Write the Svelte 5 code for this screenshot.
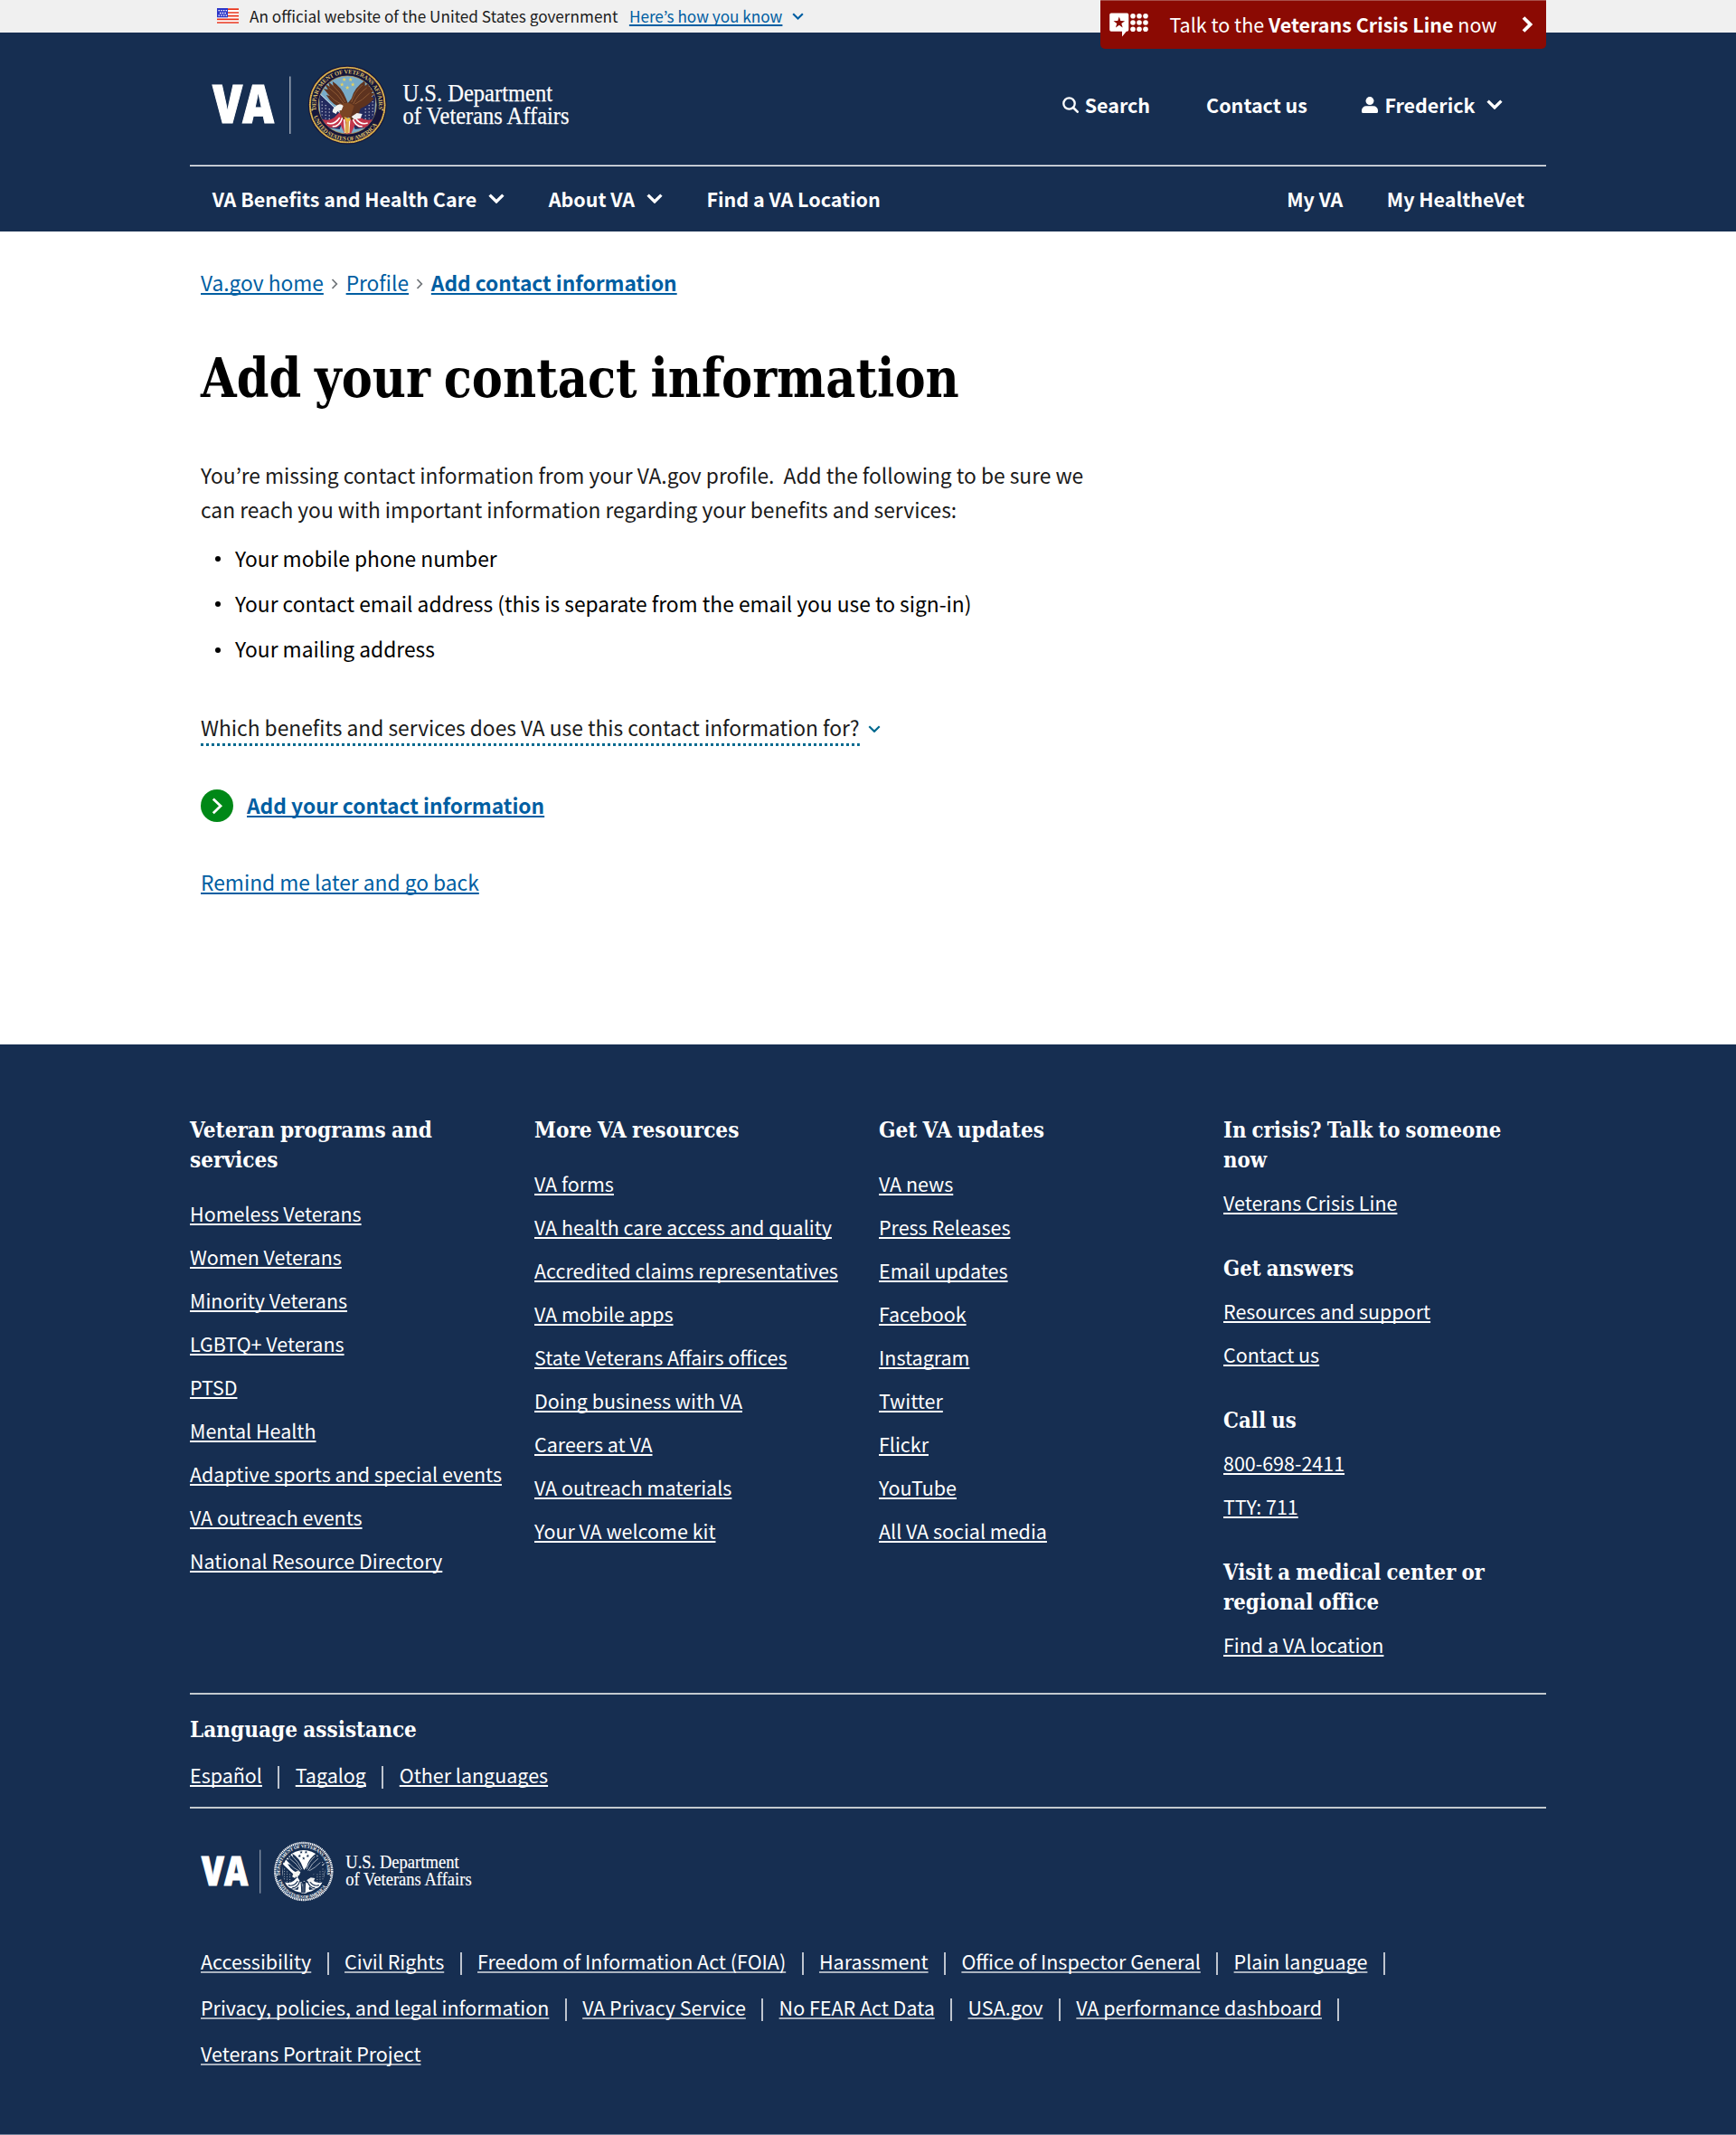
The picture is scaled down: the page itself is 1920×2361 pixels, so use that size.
<script>
  const columns = [
    {
      lines: ['Veteran programs and', 'services'],
      links: ['Homeless Veterans', 'Women Veterans', 'Minority Veterans', 'LGBTQ+ Veterans', 'PTSD', 'Mental Health', 'Adaptive sports and special events', 'VA outreach events', 'National Resource Directory']
    },
    {
      lines: ['More VA resources'],
      links: ['VA forms', 'VA health care access and quality', 'Accredited claims representatives', 'VA mobile apps', 'State Veterans Affairs offices', 'Doing business with VA', 'Careers at VA', 'VA outreach materials', 'Your VA welcome kit']
    },
    {
      lines: ['Get VA updates'],
      links: ['VA news', 'Press Releases', 'Email updates', 'Facebook', 'Instagram', 'Twitter', 'Flickr', 'YouTube', 'All VA social media']
    }
  ];
  const help = [
    { lines: ['In crisis? Talk to someone', 'now'], links: ['Veterans Crisis Line'] },
    { lines: ['Get answers'], links: ['Resources and support', 'Contact us'] },
    { lines: ['Call us'], links: ['800-698-2411', 'TTY: 711'] },
    { lines: ['Visit a medical center or', 'regional office'], links: ['Find a VA location'] }
  ];
  const languages = ['Español', 'Tagalog', 'Other languages'];
  const legal = ['Accessibility', 'Civil Rights', 'Freedom of Information Act (FOIA)', 'Harassment', 'Office of Inspector General', 'Plain language', 'Privacy, policies, and legal information', 'VA Privacy Service', 'No FEAR Act Data', 'USA.gov', 'VA performance dashboard', 'Veterans Portrait Project'];
  const needs = ['Your mobile phone number', 'Your contact email address (this is separate from the email you use to sign-in)', 'Your mailing address'];
  const stars = [[146, 16], [153, 16], [143.5, 21.5], [155.5, 21.5], [149.5, 25]];
</script>

{#snippet chevron(kind)}
  <svg class="chevron {kind}" viewBox="0 0 18 11" fill="none" stroke="currentColor"><path d="M1.6 1.6 9 8.9l7.4-7.3" /></svg>
{/snippet}

{#snippet star(x, y, r)}
  <path transform="translate({x} {y}) scale({r})" d="M0-1 .235-.324.951-.309.38.124.588.809 0 .4-.588.809-.38.124-.951-.309-.235-.324Z" />
{/snippet}

{#snippet logo(mono)}
  {@const id = mono ? 'mono' : 'full'}
  <svg class="logo" class:small={mono} viewBox="0 0 396 88">
    <defs>
      <path id="top-start-{id}" d="M115.600 51.500A34.700 34.700 0 1 1 183.400 51.500" />
      <path id="bottom-{id}" d="M110.600 51A39.500 39.500 0 0 0 188.400 51" />
      <clipPath id="disc-{id}"><circle cx="149.500" cy="44" r="32" /></clipPath>
    </defs>
    <text class="va" x="1" y="64.200" textLength="68" lengthAdjust="spacingAndGlyphs">VA</text>
    <path d="M86.800 12.500v63.500" stroke="#fff" stroke-opacity=".65" stroke-width="1.300" />
    <g transform="translate(.7 0)">
      {#if mono}
        <circle cx="149.500" cy="44" r="41.600" fill="none" stroke="#fff" stroke-width="3.200" stroke-dasharray="1.700 .9" />
        <circle cx="149.500" cy="44" r="31" fill="#fff" />
      {:else}
        <circle cx="149.500" cy="44" r="43.500" fill="#15163a" />
        <circle cx="149.500" cy="44" r="41.400" fill="none" stroke="#c99a3a" stroke-width="1.900" />
        <circle cx="149.500" cy="44" r="41.400" fill="none" stroke="#f1d67b" stroke-width="1" stroke-dasharray="1 1" />
        <circle cx="149.500" cy="44" r="32" fill="#79acc9" stroke="#c9a45a" stroke-width=".7" />
      {/if}
      <text class="ring" class:pale={mono}><textPath href="#top-start-{id}" startOffset="2" textLength="119">DEPARTMENT OF VETERANS AFFAIRS</textPath></text>
      <text class="ring" class:pale={mono}><textPath href="#bottom-{id}" startOffset="6" textLength="88">UNITED STATES OF AMERICA</textPath></text>
      <circle cx="110.500" cy="49.500" r="1" fill={mono ? '#fff' : '#d9bd6a'} />
      <circle cx="188.500" cy="49.500" r="1" fill={mono ? '#fff' : '#d9bd6a'} />
      <g clip-path="url(#disc-{id})">
        <g fill={mono ? '#162e51' : '#e8d25c'}>
          {#each stars as s}{@render star(s[0], s[1], 2.5)}{/each}
        </g>
        <!-- flags -->
        <path d="M118 31 146 58 141 71 128 69 120 59Z" fill={mono ? '#162e51' : '#232a5e'} />
        <path d="M181 31 153 58 158 71 171 69 179 59Z" fill={mono ? '#162e51' : '#232a5e'} />
        <path d="M121.500 40v18M125.500 44v18M129.500 48v15M177.500 40v18M173.500 44v18M169.500 48v15" stroke="#fff" stroke-opacity=".75" stroke-width="1.200" stroke-dasharray="1.200 2.400" />
        <path d="M122 60q8 2 13-2l6-6 9 9 9-9 5 6q6 4 13 2-4 11-15 9l-4-3-5 11h-6l-5-11-4 3q-12 2-16-9Z" fill={mono ? '#fff' : '#c3364b'} />
        <path d="M127 64q8 3 14-6M133 68q8 0 11-10M172 64q-8 3-14-6M166 68q-8 0-11-10M146 60l1 15M152 60l-1 15" fill="none" stroke={mono ? '#162e51' : '#fff'} stroke-width="1.500" />
        <path d="M117.500 30 150 61M181.500 30 149 61" stroke={mono ? '#fff' : '#d5dfe8'} stroke-width={mono ? 2.5 : 1} />
        <!-- eagle: spread wings, body, head, tail -->
        <g fill={mono ? '#162e51' : '#5e331f'}>
          <path d="M145 47Q134 46 126 33l4 1-7-8 5 1-4-7 6 4-2-6 6 5-1-5q10 6 15 19l2 5 4-5q3-12 15-20l0 6 6-5-2 6 6-3-4 6 6-1-5 5 5 0-5 4 3 2q-7 8-15 11l-3 9-7 4-5-6Z" />
        </g>
        <path d="M129 25q10 7 17 18M133 22q9 8 14 19M171 25q-10 7-15 18M166 22q-9 8-12 19M127 31q8 9 17 13M174 31q-8 8-16 12" fill="none" stroke={mono ? '#fff' : '#99633b'} stroke-width=".8" />
        <path d="M142 44q8-5 15 1l-4 12-8 3-4-7Z" fill={mono ? '#162e51' : '#7a4424'} />
        <path d="M136 46q5-5 9-1l-2 5q-5 0-6 4l-4-2q0-4 3-6Z" fill="#f4f4f0" />
        <path d="m154 57 6-4 6 1-2 5-7 1Z" fill="#f0f0f0" />
        <path d="m146 57 4 2 3-1-1 4-4 1Z" fill={mono ? '#162e51' : '#e9b93c'} />
        <path d="m146 74 2-12h3l1 12-3 2Z" fill={mono ? '#162e51' : '#e2c04d'} opacity=".8" />
      </g>
    </g>
    <text class="dept" x="211.500" y="40" textLength="165.500" lengthAdjust="spacingAndGlyphs">U.S. Department</text>
    <text class="dept" x="211.500" y="64.800" textLength="184" lengthAdjust="spacingAndGlyphs">of Veterans Affairs</text>
  </svg>
{/snippet}

{#snippet linkGroup(group, tight)}
  <section class="group" class:tight>
    <h2>{#each group.lines as line}<span class="slab">{line}</span>{/each}</h2>
    <ul>{#each group.links as label}<li><a href="#top">{label}</a></li>{/each}</ul>
  </section>
{/snippet}

<div class="banner">
  <div class="container banner-row">
    <svg class="flag" viewBox="0 0 24 17">
      <rect width="24" height="17" fill="#fff" />
      <path d="M0 1.200h24M0 5h24M0 8.700h24M0 12.400h24M0 16h24" stroke="#e8341c" stroke-width="1.700" />
      <rect width="12" height="10.300" fill="#2b35c9" />
      <path d="M1.500 2.700h9.500M3 5.500h8M1.500 8.200h9.500" stroke="#fff" stroke-width="1.300" stroke-dasharray="1.500 1.200" />
    </svg>
    <span>An official website of the United States government</span>
    <a href="#top">Here’s how you know</a>
    {@render chevron('tiny')}
  </div>
</div>

<header>
  <div class="container">
    <a class="crisis" href="#top">
      <svg class="crisis-icon" viewBox="0 0 43 27" fill="#fff">
        <path d="M2 .500h17.500a1.800 1.800 0 0 1 1.800 1.800v16.600a1.800 1.800 0 0 1-1.800 1.800h-.7L14 26.500v-5.800H2A1.800 1.800 0 0 1 .2 18.900V2.300A1.800 1.800 0 0 1 2 .500Z" />
        <g fill="#8b0a03">{@render star(10.8, 11.2, 6.6)}</g>
        {#each [3.8, 11, 18.2] as y}
          {#each [26, 33, 40] as x}<circle cx={x} cy={y} r="2.800" />{/each}
        {/each}
      </svg>
      <span class="crisis-text">Talk to the <b>Veterans Crisis Line</b> now</span>
      <svg class="crisis-arrow" viewBox="0 0 12 18" fill="none" stroke="#fff" stroke-width="3.800"><path d="m2 1.500 7.500 7.500L2 16.500" /></svg>
    </a>
    <div class="brand-row">
      {@render logo(false)}
      <div class="tools">
        <a class="tool" href="#top">
          <svg class="icon" viewBox="0 0 18 18" fill="none" stroke="#fff"><circle cx="7.500" cy="7.500" r="6.200" stroke-width="2.300" /><path d="m12 12 4.700 4.700" stroke-width="2.600" stroke-linecap="round" /></svg>
          Search
        </a>
        <a class="tool" href="#top">Contact us</a>
        <a class="tool user" href="#top">
          <svg class="icon" viewBox="0 0 18 18" fill="#fff"><circle cx="9" cy="4.600" r="4.500" /><path d="M5 10.200h8a5 5 0 0 1 5 5v1.300A1.500 1.500 0 0 1 16.500 18h-15A1.500 1.500 0 0 1 0 16.500v-1.300a5 5 0 0 1 5-5Z" /></svg>
          Frederick
          {@render chevron('bold')}
        </a>
      </div>
    </div>
    <div class="rule"></div>
    <nav>
      <a href="#top">VA Benefits and Health Care {@render chevron('bold')}</a>
      <a href="#top">About VA {@render chevron('bold')}</a>
      <a href="#top">Find a VA Location</a>
      <a class="push" href="#top">My VA</a>
      <a href="#top">My HealtheVet</a>
    </nav>
  </div>
</header>

<main>
  <div class="container content">
    <div class="crumbs">
      <a href="#top">Va.gov home</a>
      <svg class="sep" viewBox="0 0 8 12"><path d="m1.500 1 4.800 5-4.800 5" /></svg>
      <a href="#top">Profile</a>
      <svg class="sep" viewBox="0 0 8 12"><path d="m1.500 1 4.800 5-4.800 5" /></svg>
      <a class="current" href="#top">Add contact information</a>
    </div>
    <h1><span class="slab">Add your contact information</span></h1>
    <p>You’re missing contact information from your VA.gov profile.&nbsp; Add the following to be sure we<br />can reach you with important information regarding your benefits and services:</p>
    <ul class="needs">{#each needs as need}<li>{need}</li>{/each}</ul>
    <div class="disclosure"><span>Which benefits and services does VA use this contact information for?</span>{@render chevron('teal')}</div>
    <a class="action" href="#top">
      <svg class="action-icon" viewBox="0 0 36 36"><circle cx="18" cy="18" r="18" fill="#008817" /><path d="m13.800 10.400 8.200 7.900-8.200 7.900" fill="none" stroke="#fff" stroke-width="2.800" /></svg>
      <span>Add your contact information</span>
    </a>
    <a class="later" href="#top">Remind me later and go back</a>
  </div>
</main>

<footer>
  <div class="container">
    <div class="columns">
      {#each columns as column}{@render linkGroup(column, false)}{/each}
      <div>{#each help as group}{@render linkGroup(group, true)}{/each}</div>
    </div>
    <div class="language">
      <h2><span class="slab">Language assistance</span></h2>
      <div class="inline">{#each languages as label}<span class="piped"><a href="#top">{label}</a></span>{/each}</div>
    </div>
    <div class="bottom">
      {@render logo(true)}
      <div class="inline legal">{#each legal as label}<span class="piped"><a href="#top">{label}</a></span>{/each}</div>
    </div>
  </div>
</footer>

<style>
  :global(body) {
    background: #fff;
    font-family: 'Noto Sans CJK KR', 'Open Sans', sans-serif;
    font-size: 21.47px;
  }
  a {
    color: inherit;
    text-decoration-skip-ink: none;
    text-decoration-thickness: 1.5px;
    text-underline-offset: 2px;
  }
  h1, h2, p, ul { margin: 0; padding: 0; }
  ul { list-style: none; }
  svg { display: block; flex: none; }
  .container { width: 1500px; margin: 0 auto; position: relative; }
  .slab {
    display: block;
    width: max-content;
    font-family: 'DejaVu Serif', serif;
    font-weight: 700;
    word-spacing: -0.06em;
    transform: scaleX(0.867);
    transform-origin: 0 0;
  }
  .tight .slab { transform: scaleX(0.853); }

  .banner { background: #f0f0f0; height: 36px; color: #1b1b1b; }
  .banner-row { display: flex; align-items: center; height: 34px; box-sizing: border-box; padding-left: 30px; font-size: 17.18px; }
  .flag { width: 24px; height: 17px; margin-right: 12px; }
  .banner a { color: #005ea2; margin: 0 11px 0 12.5px; }

  .chevron { width: 18px; height: 11px; stroke-width: 3.4; }
  .chevron.tiny { width: 13px; height: 8px; color: #005ea2; stroke-width: 3; margin-top: 2px; }
  .chevron.teal { width: 14px; height: 8.5px; color: #00698f; stroke-width: 2.8; margin: 0 0 0 9px; }

  header { background: #162e51; color: #fff; height: 220px; font-weight: 700; }
  header a { text-decoration: none; }
  .crisis {
    position: absolute;
    top: -36px;
    right: 0;
    display: flex;
    align-items: center;
    box-sizing: border-box;
    width: 493.5px;
    height: 54px;
    padding: 0 15px 1px 10.5px;
    border-radius: 0 0 5px 5px;
    background: #8b0a03;
    border-top: 1px solid #a8504b;
    font-weight: 400;
  }
  .crisis-icon { width: 43px; height: 27px; margin-right: 23.5px; }
  .crisis-text { margin-top: -1px; }
  .crisis-arrow { width: 12px; height: 18px; margin-left: auto; }
  .brand-row { display: flex; align-items: center; justify-content: space-between; height: 146px; box-sizing: border-box; padding: 13px 48px 0 24px; }
  .logo { width: 396px; height: 88px; overflow: visible; }
  .logo.small { width: 300px; height: 67px; }
  .va { font: 800 59px 'Open Sans', sans-serif; fill: #fff; stroke: #fff; stroke-width: 1.2px; }
  .dept { font: 400 27px 'Liberation Serif', serif; fill: #fff; stroke: #fff; stroke-width: 0.25px; }
  .ring { font: 700 6.6px 'Liberation Serif', serif; fill: #d9bd6a; }
  .ring.pale { fill: #fff; }
  .tools { display: flex; gap: 62px; }
  .tool { display: flex; align-items: center; gap: 6.5px; }
  .user { margin-left: -2px; gap: 7.5px; }
  .tool .chevron { margin-left: 5px; }
  .icon { width: 18px; height: 18px; }
  .rule { height: 2px; background: linear-gradient(rgba(255, 255, 255, 0.45) 50%, #fff 50%); }
  nav { display: flex; align-items: center; gap: 48.5px; height: 71px; padding: 0 24px 0 24.7px; }
  nav a { display: flex; align-items: center; gap: 13px; }
  .push { margin-left: auto; }

  main { height: 899px; box-sizing: border-box; padding-top: 38px; font-size: 22.77px; color: #000; }
  .content { display: flex; flex-direction: column; align-items: flex-start; box-sizing: border-box; padding-left: 12px; }
  main a { color: #005ea2; }
  .crumbs { display: flex; align-items: center; height: 37px; gap: 8.4px; font-size: 22.72px; }
  .sep { width: 8px; height: 12px; fill: none; stroke: #71767a; stroke-width: 1.8; margin-top: 3px; }
  .current { font-weight: 700; }
  h1 { font-size: 59px; line-height: 72px; margin-top: 52px; }
  p { line-height: 38px; margin-top: 52px; color: #1b1b1b; }
  .needs { margin-top: 9px; }
  .needs li { display: flex; align-items: center; height: 50.3px; }
  .needs li::before { content: ''; width: 6px; height: 6px; border-radius: 50%; background: #000; margin: 2px 16px 0; }
  .disclosure { display: flex; align-items: center; margin-top: 44px; color: #1b1b1b; }
  .disclosure span {
    line-height: 36px;
    padding-bottom: 2px;
    background: repeating-linear-gradient(90deg, #00698f 0 3px, transparent 3px 6px) bottom / 100% 3px no-repeat;
  }
  .action { display: flex; align-items: center; gap: 15px; margin-top: 48px; height: 36px; font-weight: 700; }
  .action-icon { width: 36px; height: 36px; }
  .action span { margin-top: -1px; }
  .later { margin-top: 49px; line-height: 36px; }

  footer { background: #162e51; color: #fff; height: 1206px; box-sizing: border-box; padding-top: 78px; border-bottom: 1px solid #73829a; }
  .columns { display: grid; grid-template-columns: repeat(4, 357px); gap: 24px; padding-bottom: 29px; border-bottom: 2px solid #c3c9cf; }
  h2 { font-size: 25px; line-height: 33.2px; }
  .group ul { margin-top: 19px; }
  .group li { line-height: 48px; }
  .tight ul { margin-top: 7px; }
  .tight:not(:first-child) { margin-top: 31.6px; }
  .language { height: 126px; box-sizing: border-box; padding-top: 22px; border-bottom: 2px solid #c3c9cf; }
  .inline { display: flex; flex-wrap: wrap; line-height: 36px; }
  .language .inline { margin-top: 16px; }
  .piped { display: flex; align-items: center; }
  .piped:not(:last-child)::after { content: ''; width: 2px; height: 25px; margin: 5px 17.4px 0; background: rgba(255, 255, 255, 0.72); }
  .bottom { padding: 35.5px 12px 0; }
  .legal { margin-top: 40.5px; line-height: 51px; }
  .legal a { text-decoration-color: #a9b2bf; text-decoration-thickness: 2px; }
</style>
